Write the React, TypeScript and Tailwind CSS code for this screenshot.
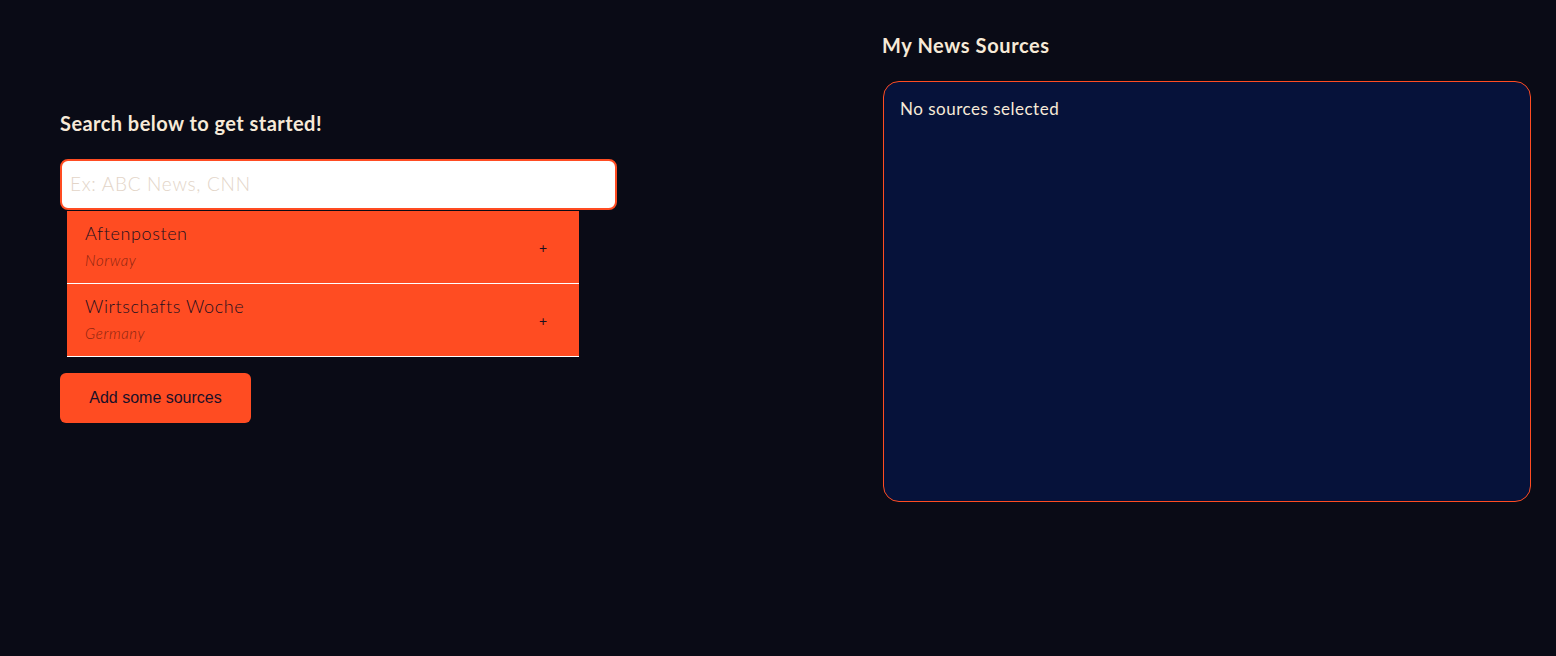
import React from "react";

export default function App() {
  const items = [
    { name: "Aftenposten", country: "Norway" },
    { name: "Wirtschafts Woche", country: "Germany" },
  ];
  return (
    <div className="min-h-[656px] w-full bg-[#0a0b16] flex" style={{ fontFamily: "Lato, 'Noto Sans', sans-serif" }}>
      <div className="w-[883px] pl-[60px] pt-[111px]">
        <h2 className="text-[20px] font-bold text-[#f7ead8] leading-[24px] tracking-[0.45px]">Search below to get started!</h2>
        <div className="mt-[24px] w-[557px] h-[51px] rounded-[8px] border-2 border-[#ff4c22] bg-white flex items-center px-[8px]">
          <span className="text-[19px] text-[#e3d5c8] font-light tracking-[0.7px]">Ex: ABC News, CNN</span>
        </div>
        <div className="ml-[7px] mt-[1px] w-[512px]">
          {items.map((it) => (
            <div key={it.name} className="h-[73px] bg-[#ff4c22] border-b border-white flex items-center pl-[18px] pr-[32px]">
              <div className="flex-1 flex flex-col pb-[4px]">
                <span className="text-[18px] font-light text-[#1c1020] leading-[24px] tracking-[0.6px]">{it.name}</span>
                <span className="text-[15px] italic font-light text-[#8a2410] leading-[20px] mt-[5px] tracking-[0.6px]">{it.country}</span>
              </div>
              <span className="text-[14px] text-[#1c1020]">+</span>
            </div>
          ))}
        </div>
        <button className="mt-[16px] w-[191px] h-[50px] rounded-[6px] bg-[#ff4c22] text-[16px] text-[#1a1028]" style={{ fontFamily: "'Liberation Sans', Arial, sans-serif" }}>
          Add some sources
        </button>
      </div>
      <div className="w-[648px] pt-[33px]">
        <h2 className="text-[20px] font-bold text-[#f7ead8] leading-[24px] tracking-[0.6px] -ml-[1px]">My News Sources</h2>
        <div className="mt-[24px] h-[421px] rounded-[16px] border border-[#ff4c22] bg-[#06123a] px-[16px] pt-[15px]">
          <p className="text-[17px] text-[#f7ead8] leading-[24px] tracking-[0.5px]">No sources selected</p>
        </div>
      </div>
    </div>
  );
}
